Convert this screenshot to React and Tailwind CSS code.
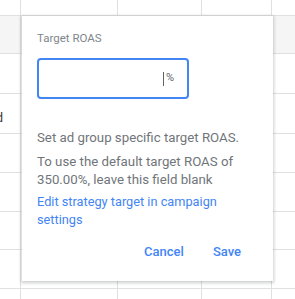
export default function App() {
  const rows = [
    { h: "h-[38px]", bg: "bg-[#f5f5f5]" },
    { h: "h-[40px]", bg: "bg-white" },
    { h: "h-[40px]", bg: "bg-white", label: true },
    { h: "h-[39px]", bg: "bg-white" },
    { h: "h-[39px]", bg: "bg-white" },
    { h: "h-[38px]", bg: "bg-white" },
    { h: "h-[39px]", bg: "bg-white" },
    { h: "h-[39px]", bg: "bg-white" },
  ];

  return (
    <div className="relative w-[295px] h-[299px] overflow-hidden bg-white font-['Roboto',sans-serif] text-[13px] text-[#3c4043]">
      {/* table in the background */}
      <div className="grid grid-cols-[21px_97px_84px_70px_23px] h-[16px] border-b border-[#e0e0e0]">
        <div className="border-r border-[#e0e0e0]" />
        <div className="border-r border-[#e0e0e0] overflow-hidden">
          <div className="-mt-[12px] pl-[9px] leading-[13px] text-[#5f6368]">Standard</div>
        </div>
        <div className="border-r border-[#e0e0e0]" />
        <div className="border-r border-[#e0e0e0] overflow-hidden">
          <div className="-mt-[12px] pr-[9px] text-right leading-[13px] text-[#5f6368]">0.0</div>
        </div>
        <div />
      </div>
      {rows.map((r, i) => (
        <div
          key={i}
          className={`grid grid-cols-[21px_97px_84px_70px_23px] border-b border-[#e0e0e0] ${r.h} ${r.bg}`}
        >
          <div className="border-r border-[#e0e0e0] overflow-hidden flex items-center justify-end pr-[17px]">
            {r.label && <span className="whitespace-nowrap pt-[8px]">Standard</span>}
          </div>
          <div className="border-r border-[#e0e0e0]" />
          <div className="border-r border-[#e0e0e0]" />
          <div className="border-r border-[#e0e0e0]" />
          <div />
        </div>
      ))}

      {/* popup */}
      <div className="absolute left-[22px] top-[16px] w-[251px] h-[265px] bg-white shadow-[0_1px_3px_1px_rgba(60,64,67,0.25)] px-[15px] pt-[14px]">
        <div className="text-[11.5px] leading-[16px] text-[#80868b]">Target ROAS</div>
        <div className="mt-[12px] w-[152px] h-[41px] rounded-[4px] border-2 border-[#4285f4] flex items-center justify-end pr-[13px]">
          <span className="w-px h-[14px] bg-[#5f6368] mr-[2px]" />
          <span className="text-[11px] text-[#5f6368]">%</span>
        </div>
        <p className="mt-[30px] text-[13.25px] leading-[18px] text-[#70757a]">Set ad group specific target ROAS.</p>
        <p className="mt-[6px] text-[13.25px] leading-[18px] text-[#70757a]">
          To use the default target ROAS of 350.00%, leave this field blank
        </p>
        <p className="mt-[4px] text-[12.75px] leading-[18px] text-[#4285f4]">Edit strategy target in campaign settings</p>
        <div className="mt-[14px] flex justify-end gap-[29px] pr-[17px] text-[13px] leading-[18px] font-medium text-[#4285f4]">
          <button>Cancel</button>
          <button>Save</button>
        </div>
      </div>
    </div>
  );
}
